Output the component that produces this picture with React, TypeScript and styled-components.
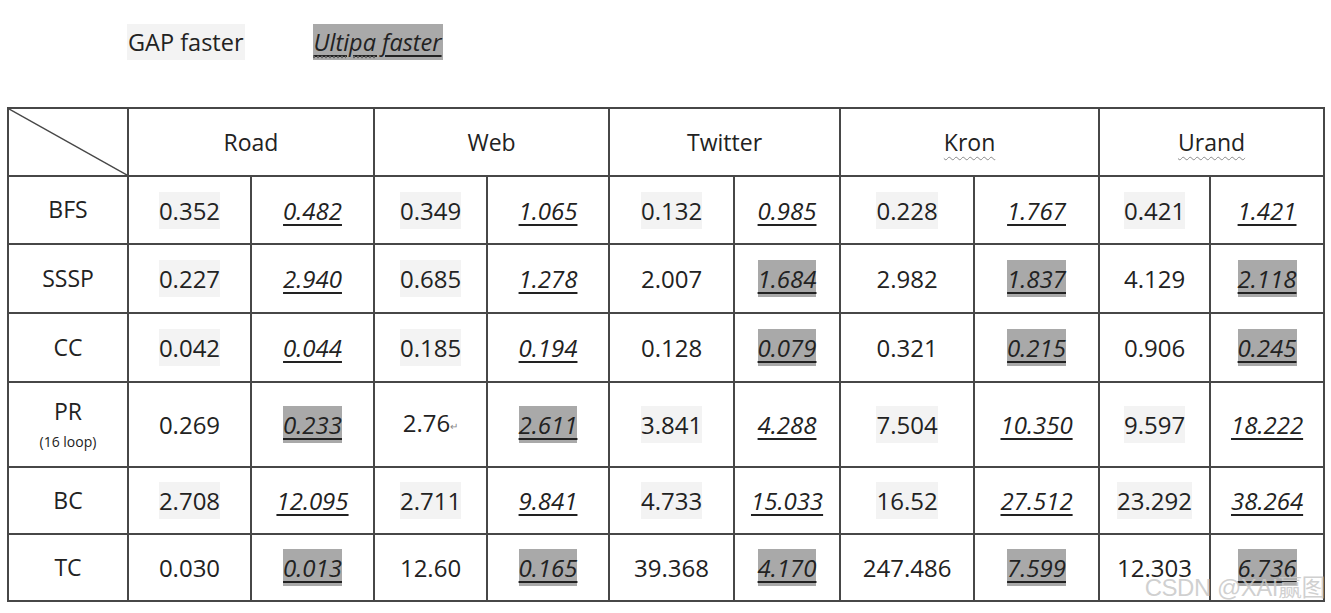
import styled, { createGlobalStyle } from "styled-components";

const GlobalStyle = createGlobalStyle`
  body {
    margin: 0;
    background: #ffffff;
    font-family: "Open Sans", "Noto Sans", sans-serif;
    color: #222222;
  }
`;

const Page = styled.div`
  position: relative;
  width: 1331px;
  height: 613px;
  overflow: hidden;
  padding: 24px 0 0 7px;
  box-sizing: border-box;
`;

const Legend = styled.div`
  display: flex;
  align-items: center;
  gap: 68px;
  padding-left: 120px;
  height: 36px;
  margin-bottom: 47px;
`;

const LegendItem = styled.span<{ $ultipa?: boolean }>`
  display: inline-block;
  line-height: 36px;
  padding: 0 1px;
  font-size: 23.5px;
  background: ${(p) => (p.$ultipa ? "#a9a9a9" : "#f3f3f3")};
  font-style: ${(p) => (p.$ultipa ? "italic" : "normal")};
  text-decoration: ${(p) => (p.$ultipa ? "underline" : "none")};
  text-decoration-thickness: 2px;
  text-underline-offset: 4px;
`;

const Squiggle = styled.span`
  text-decoration: underline dotted #666;
  text-underline-offset: 5px;
`;

const Table = styled.table`
  border-collapse: collapse;
  table-layout: fixed;
  width: 1316px;
`;

const Cell = styled.td<{ $h: number }>`
  border: 2px solid #474747;
  height: ${(p) => p.$h}px;
  padding: 0;
  text-align: center;
  vertical-align: middle;
  font-size: 23px;
`;

const Corner = styled.td`
  border: 2px solid #474747;
  height: 66px;
  padding: 0;
  position: relative;
`;

const Diagonal = styled.svg`
  position: absolute;
  inset: 0;
  width: 100%;
  height: 100%;
`;

const Dataset = styled.span<{ $wavy?: boolean }>`
  text-decoration: ${(p) => (p.$wavy ? "underline wavy #8a8a8a" : "none")};
  text-decoration-thickness: 1px;
  text-underline-offset: 5px;
`;

const RowLabel = styled.div`
  display: flex;
  flex-direction: column;
  align-items: center;
  line-height: 1.2;
`;

const SubLabel = styled.span`
  font-size: 14px;
  margin-top: 8px;
`;

const Value = styled.span<{ $bg: "none" | "light" | "dark"; $ultipa?: boolean }>`
  display: inline-block;
  line-height: 37px;
  font-size: 24px;
  background: ${(p) =>
    p.$bg === "light" ? "#f3f3f3" : p.$bg === "dark" ? "#a9a9a9" : "transparent"};
  font-style: ${(p) => (p.$ultipa ? "italic" : "normal")};
  text-decoration: ${(p) => (p.$ultipa ? "underline" : "none")};
  text-decoration-thickness: 2px;
  text-underline-offset: 4px;
`;

const Mark = styled.span`
  font-size: 10px;
  color: #888;
  vertical-align: 2px;
`;

const Watermark = styled.div`
  position: absolute;
  right: 6px;
  bottom: 10px;
  font-family: "Liberation Sans", "Noto Sans CJK SC", sans-serif;
  font-size: 24px;
  color: rgba(200, 200, 200, 0.85);
  letter-spacing: -0.5px;
  pointer-events: none;
`;

type Bg = "none" | "light" | "dark";
type Pair = [string, Bg, string, Bg];

const cols = [120, 123, 123, 113, 122, 125, 106, 134, 125, 111, 114];
const datasets = [
  { name: "Road", wavy: false },
  { name: "Web", wavy: false },
  { name: "Twitter", wavy: false },
  { name: "Kron", wavy: true },
  { name: "Urand", wavy: true },
];

const rows: { label: string; sub?: string; h: number; data: Pair[] }[] = [
  {
    label: "BFS",
    h: 66,
    data: [
      ["0.352", "light", "0.482", "none"],
      ["0.349", "light", "1.065", "none"],
      ["0.132", "light", "0.985", "none"],
      ["0.228", "light", "1.767", "none"],
      ["0.421", "light", "1.421", "none"],
    ],
  },
  {
    label: "SSSP",
    h: 67,
    data: [
      ["0.227", "light", "2.940", "none"],
      ["0.685", "light", "1.278", "none"],
      ["2.007", "none", "1.684", "dark"],
      ["2.982", "none", "1.837", "dark"],
      ["4.129", "none", "2.118", "dark"],
    ],
  },
  {
    label: "CC",
    h: 67,
    data: [
      ["0.042", "light", "0.044", "none"],
      ["0.185", "light", "0.194", "none"],
      ["0.128", "none", "0.079", "dark"],
      ["0.321", "none", "0.215", "dark"],
      ["0.906", "none", "0.245", "dark"],
    ],
  },
  {
    label: "PR",
    sub: "(16 loop)",
    h: 83,
    data: [
      ["0.269", "none", "0.233", "dark"],
      ["2.76", "none", "2.611", "dark"],
      ["3.841", "light", "4.288", "none"],
      ["7.504", "light", "10.350", "none"],
      ["9.597", "light", "18.222", "none"],
    ],
  },
  {
    label: "BC",
    h: 65,
    data: [
      ["2.708", "light", "12.095", "none"],
      ["2.711", "light", "9.841", "none"],
      ["4.733", "light", "15.033", "none"],
      ["16.52", "light", "27.512", "none"],
      ["23.292", "light", "38.264", "none"],
    ],
  },
  {
    label: "TC",
    h: 65,
    data: [
      ["0.030", "none", "0.013", "dark"],
      ["12.60", "none", "0.165", "dark"],
      ["39.368", "none", "4.170", "dark"],
      ["247.486", "none", "7.599", "dark"],
      ["12.303", "none", "6.736", "dark"],
    ],
  },
];

const App = () => {
  return (
    <>
      <GlobalStyle />
      <Page>
        <Legend>
          <LegendItem>GAP faster</LegendItem>
          <LegendItem $ultipa>
            <Squiggle>Ultipa</Squiggle> faster
          </LegendItem>
        </Legend>
        <Table>
          <colgroup>
            {cols.map((w, i) => (
              <col key={i} style={{ width: w }} />
            ))}
          </colgroup>
          <tbody>
            <tr>
              <Corner>
                <Diagonal viewBox="0 0 100 100" preserveAspectRatio="none">
                  <line
                    x1="0"
                    y1="0"
                    x2="100"
                    y2="100"
                    stroke="#474747"
                    strokeWidth="1.5"
                    vectorEffect="non-scaling-stroke"
                  />
                </Diagonal>
              </Corner>
              {datasets.map((d) => (
                <Cell key={d.name} $h={66} colSpan={2}>
                  <Dataset $wavy={d.wavy}>{d.name}</Dataset>
                </Cell>
              ))}
            </tr>
            {rows.map((r) => (
              <tr key={r.label}>
                <Cell $h={r.h}>
                  <RowLabel>
                    {r.label}
                    {r.sub && <SubLabel>{r.sub}</SubLabel>}
                  </RowLabel>
                </Cell>
                {r.data.map(([g, gb, u, ub], i) => [
                  <Cell key={`g${i}`} $h={r.h}>
                    <Value $bg={gb}>
                      {g}
                      {g === "2.76" && <Mark>↵</Mark>}
                    </Value>
                  </Cell>,
                  <Cell key={`u${i}`} $h={r.h}>
                    <Value $bg={ub} $ultipa>
                      {u}
                    </Value>
                  </Cell>,
                ])}
              </tr>
            ))}
          </tbody>
        </Table>
        <Watermark>CSDN @XAI赢图</Watermark>
      </Page>
    </>
  );
};

export default App;
